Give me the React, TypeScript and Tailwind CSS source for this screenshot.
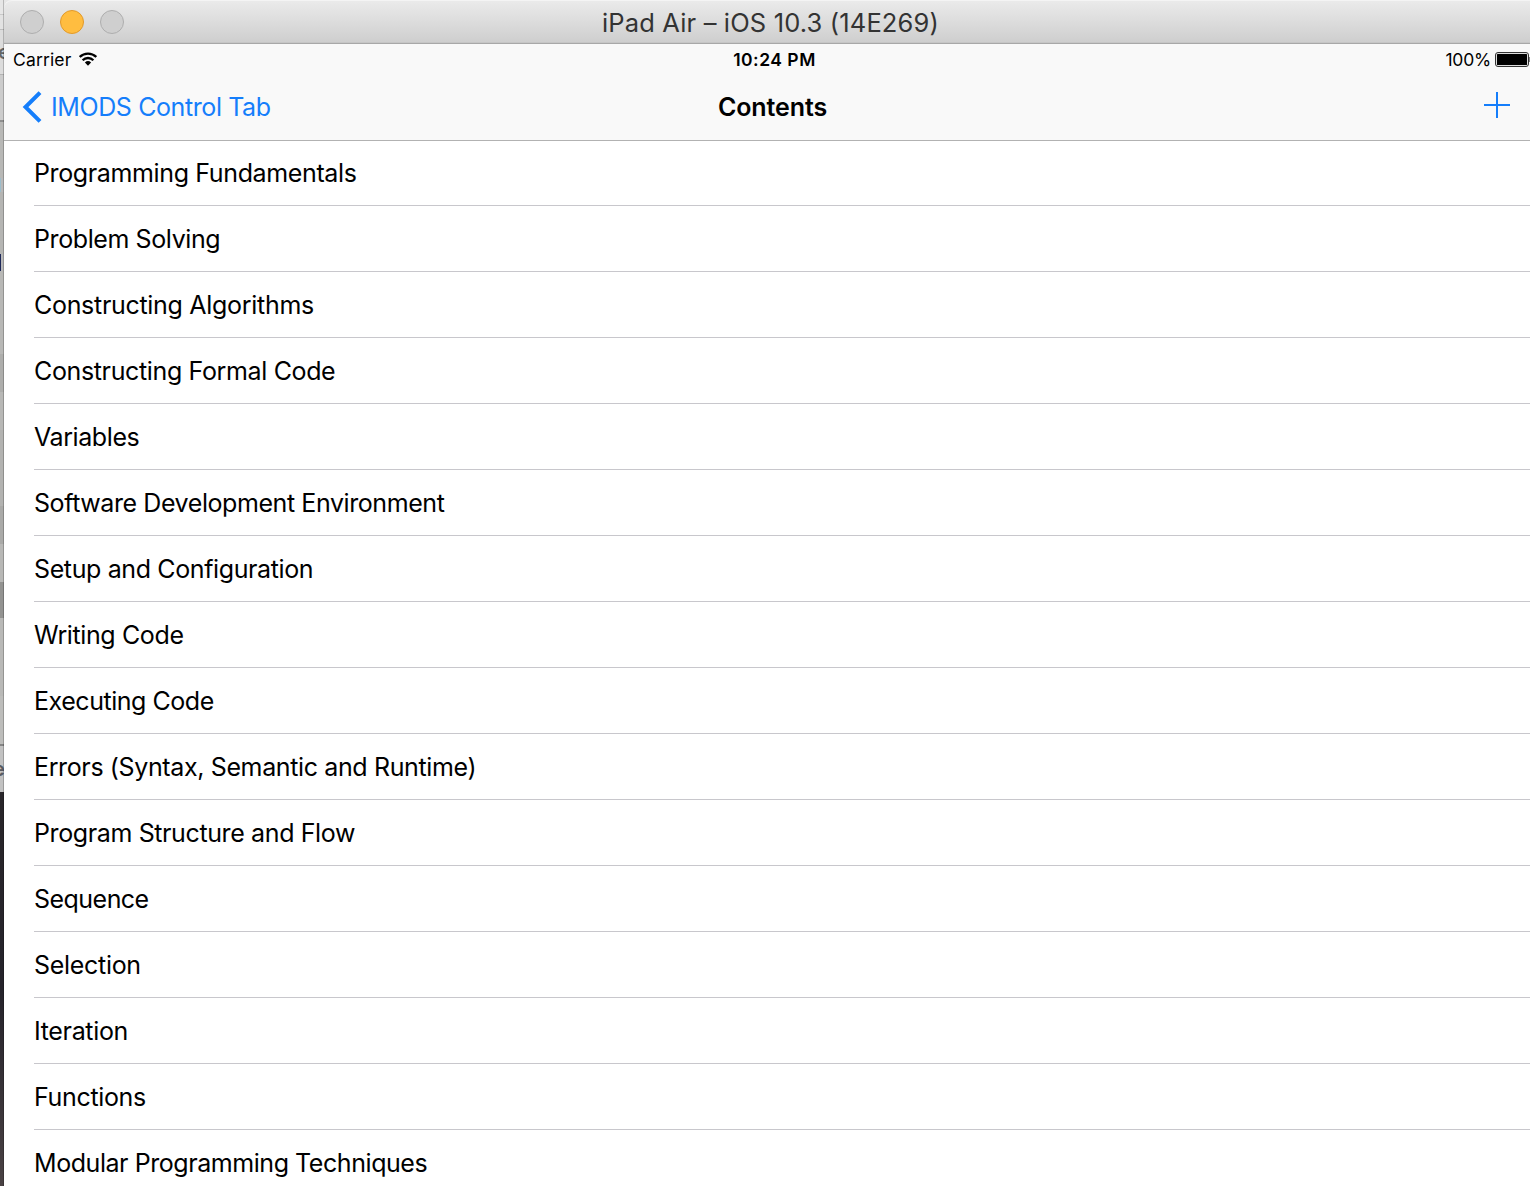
const rows = [
  { label: "Programming Fundamentals", tracking: "tracking-[-0.37px]" },
  { label: "Problem Solving", tracking: "tracking-[-0.4px]" },
  { label: "Constructing Algorithms", tracking: "tracking-[-0.3px]" },
  { label: "Constructing Formal Code", tracking: "tracking-[-0.36px]" },
  { label: "Variables", tracking: "tracking-[-0.41px]" },
  { label: "Software Development Environment", tracking: "tracking-[-0.42px]" },
  { label: "Setup and Configuration", tracking: "tracking-[-0.38px]" },
  { label: "Writing Code", tracking: "tracking-[-0.38px]" },
  { label: "Executing Code", tracking: "tracking-[-0.46px]" },
  { label: "Errors (Syntax, Semantic and Runtime)", tracking: "tracking-[-0.37px]" },
  { label: "Program Structure and Flow", tracking: "tracking-[-0.38px]" },
  { label: "Sequence", tracking: "tracking-[-0.53px]" },
  { label: "Selection", tracking: "tracking-[-0.3px]" },
  { label: "Iteration", tracking: "tracking-[-0.34px]" },
  { label: "Functions", tracking: "tracking-[-0.34px]" },
  { label: "Modular Programming Techniques", tracking: "tracking-[-0.44px]" },
];

function Backdrop() {
  return (
    <div className="relative flex h-full w-1 shrink-0 flex-col overflow-visible bg-[#b9b9b9]">
      <div className="h-[15px] w-5 shrink-0 border-b border-[#c9c9c9] bg-[#e6e6e6]" />
      <div className="h-[15px] shrink-0 border-b border-[#bdbdbd] bg-[#e2e2e2]" />
      <div className="flex h-[45px] w-1 shrink-0 items-center overflow-hidden border-b border-[#b4b4b4] bg-[#dcdcdc] text-[20px] font-semibold text-[#666]">
        <span className="-ml-[2px]">e</span>
      </div>
      <div className="h-[47px] shrink-0 border-b-2 border-[#8f8f8f] bg-[#cccccc]" />
      <div className="h-[56px] shrink-0 bg-[#b8b8b6]" />
      <div className="h-[14px] w-px shrink-0 bg-[#9dbdcb]" />
      <div className="h-[62px] shrink-0 bg-[#b5b5b3]" />
      <div className="h-[17px] w-px shrink-0 bg-[#1e2858]" />
      <div className="h-[45px] shrink-0 bg-[#b8b8b6]" />
      <div className="h-[38px] shrink-0 bg-[#b8b8b6]" />
      <div className="h-[38px] shrink-0 bg-[#aeaeac]" />
      <div className="h-[38px] shrink-0 bg-[#b8b8b6]" />
      <div className="h-[76px] shrink-0 bg-[#b3b3b1]" />
      <div className="h-[38px] shrink-0 bg-[#aaaaa8]" />
      <div className="h-[38px] shrink-0 bg-[#b8b8b6]" />
      <div className="h-[36px] shrink-0 bg-[#939391]" />
      <div className="h-[78px] shrink-0 bg-[#b9b9b7]" />
      <div className="h-[50px] shrink-0 border-b-2 border-[#858585] bg-[#bdbdbb]" />
      <div className="flex h-[46px] w-1 shrink-0 items-center overflow-hidden bg-[#c2c2c2] text-[20px] font-semibold text-[#5b5b60]">
        <span className="-ml-[7px]">e</span>
      </div>
      <div className="flex-1 bg-linear-to-b from-[#29262a] via-[#25232b] to-[#4a4244]" />
      <div className="absolute inset-y-0 left-[3px] w-px bg-black/20" />
    </div>
  );
}

function TitleBar() {
  return (
    <div className="grid h-11 shrink-0 grid-cols-[1fr_auto_1fr] items-center rounded-tl-[8px] border-b border-[#a8a8a8] bg-linear-to-b from-[#ebebeb] to-[#cecece] shadow-[inset_0_1px_0_#f4f4f4,inset_0_-1px_0_#c6c6c6]">
      <div className="flex gap-4 pl-4">
        <span className="size-6 rounded-full border border-[#aeaeae] bg-[#cfcfcf]" />
        <span className="size-6 rounded-full border border-[#e29a2b] bg-[#ffbd40]" />
        <span className="size-6 rounded-full border border-[#aeaeae] bg-[#cfcfcf]" />
      </div>
      <h1 className="pt-0.5 pl-[7px] text-[25.5px] leading-8 tracking-[0.15px] text-[#333]">
        iPad Air – iOS 10.3 (14E269)
      </h1>
      <div />
    </div>
  );
}

function StatusBar() {
  return (
    <div className="grid h-[30px] grid-cols-3 items-center text-[17.5px] leading-[22px]">
      <div className="flex items-center gap-2 pl-[9px]">
        <span className="pt-0.5 tracking-[0.15px]">Carrier</span>
        <svg className="h-[14px] w-[18px]" viewBox="0 0 18 14" fill="none" stroke="#000" strokeWidth="2.3">
          <path d="M.7 5a11.8 11.8 0 0 1 16.6 0" />
          <path d="M3.6 8.2a7.7 7.7 0 0 1 10.8 0" />
          <path d="M9 13.7 5.9 10.5a4.5 4.5 0 0 1 6.2 0Z" fill="#000" stroke="none" />
        </svg>
      </div>
      <div className="pt-0.5 pl-[15px] text-center font-semibold tracking-[0.5px]">10:24 PM</div>
      <div className="flex items-center justify-end gap-1">
        <span className="pt-0.5 tracking-[-0.2px]">100%</span>
        <svg className="h-4 w-[35px]" viewBox="0 0 35 16">
          <rect x=".5" y="1.5" width="33" height="14" rx="2.5" fill="#ddd" stroke="#333" />
          <rect x="2" y="3" width="30" height="11" rx=".5" />
          <path d="M34.3 6h.7v5h-.7z" fill="#555" />
        </svg>
      </div>
    </div>
  );
}

function NavBar() {
  return (
    <div className="grid h-[66px] grid-cols-3 items-center text-[25px] leading-8">
      <div className="flex items-center gap-2 pl-[18px] text-[#157efb]">
        <svg className="h-8 w-5" viewBox="0 0 20 32" fill="none" stroke="#157efb" strokeWidth="4">
          <path d="M18 1.6 3.5 16 18 30.4" />
        </svg>
        <span className="pl-px tracking-[-0.4px]">IMODS Control Tab</span>
      </div>
      <div className="pl-[11px] text-center font-semibold tracking-[-0.1px]">Contents</div>
      <div className="flex justify-end pr-5 pb-1">
        <svg className="size-[26px]" viewBox="0 0 26 26" stroke="#157efb" strokeWidth="2">
          <path d="M0 13h26M13 0v26" />
        </svg>
      </div>
    </div>
  );
}

export default function App() {
  return (
    <div className="flex h-[1186px] w-[1530px] overflow-hidden bg-white font-['Inter','Liberation_Sans',sans-serif] text-black">
      <Backdrop />
      <main className="relative flex min-w-0 flex-1 flex-col">
        <TitleBar />
        <header className="relative z-10 h-[97px] shrink-0 border-b border-[#b2b2b2] bg-[#f9f9f9]">
          <StatusBar />
          <NavBar />
        </header>
        <ul className="-mt-px flex-1 overflow-hidden bg-white pl-[30px]">
          {rows.map((row) => (
            <li
              key={row.label}
              className="flex h-[66px] items-center border-b border-[#c8c7cc] text-[25px] leading-8"
            >
              <span className={row.tracking}>{row.label}</span>
            </li>
          ))}
        </ul>
      </main>
    </div>
  );
}
